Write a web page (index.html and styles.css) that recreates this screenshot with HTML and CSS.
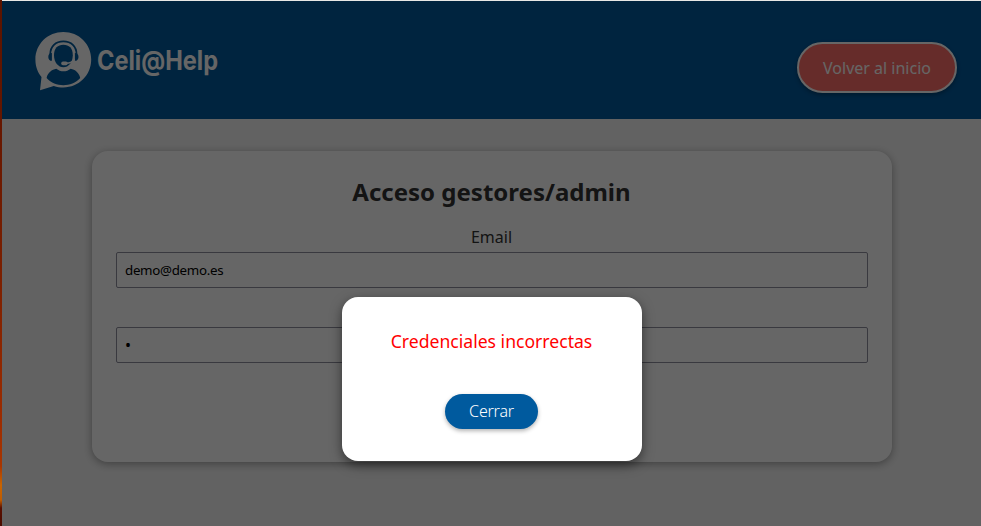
FILE: index.html
```html
<!DOCTYPE html>
<html lang="es">
<head>
<meta charset="utf-8">
<title>Celi@Help</title>
<link rel="stylesheet" href="styles.css">
</head>
<body>
<div class="window">
  <header class="header">
    <div class="brand">
      <svg class="brand-icon" viewBox="0 0 58 60" width="58" height="60">
        <path d="M28.300 1C13 1 .4 12.800.4 28.500c0 7.200 2.400 13 6.100 17.500L5 59.300 18.800 54.900C22 56 25.300 56.500 28.300 56.500 44 56.500 56.200 44.200 56.200 28.600S44 1 28.300 1Z" fill="#fff"/>
        <path d="M11.600 47C12.600 41.700 17 38.600 21.300 37.800 25.500 41.200 31.500 41.200 35.700 37.800 40 38.600 44.200 41.700 45.200 47 36.200 56.600 20.500 56.600 11.600 47Z" fill="#005a9e"/>
        <path d="M19 24.300C19 17 22.800 13.700 28.400 13.700S37.800 17 37.800 24.300C37.700 31.500 33.600 36.300 28.400 36.300S19.100 31.500 19 24.300Z" fill="#005a9e"/>
        <path d="M15.300 23C15.300 15.400 20.600 10.300 28.400 10.300S41.500 15.400 41.500 23" fill="none" stroke="#005a9e" stroke-width="1.800"/>
        <path d="M16.900 22V29.800C14.600 29.800 13.300 28.300 13.300 25.900S14.600 22 16.900 22ZM39.900 22V29.800C42.200 29.800 43.500 28.300 43.500 25.900S42.200 22 39.900 22Z" fill="#005a9e"/>
        <path d="M39.300 28C38.200 31 35.300 32.200 30.500 32.300" fill="none" stroke="#fff" stroke-width="1.500"/>
        <rect x="26.200" y="30.500" width="6.500" height="3.700" rx="1.800" fill="#fff"/>
      </svg>
      <svg class="brand-name" width="124" height="40" viewBox="0 0 124 40"><text x="1" y="29" textLength="121" lengthAdjust="spacingAndGlyphs">Celi@Help</text></svg>
    </div>
    <button class="back">Volver al inicio</button>
  </header>
  <main class="main">
    <form class="card">
      <h1 class="title">Acceso gestores/admin</h1>
      <label class="label" for="email">Email</label>
      <input class="field" id="email" type="text" value="demo@demo.es">
      <input class="field field-password" type="text" value="•" aria-label="Clave">
    </form>
  </main>
  <div class="overlay">
    <div class="modal">
      <p class="message">Credenciales incorrectas</p>
      <button class="close">Cerrar</button>
    </div>
  </div>
</div>
</body>
</html>
```
FILE: styles.css
```css
* {
  box-sizing: border-box;
}

body {
  margin: 0;
  height: 526px;
  padding: 1px 0 0 2px;
  overflow: hidden;
  font-family: "Noto Sans", sans-serif;
  font-size: 16px;
  background:
    linear-gradient(#e8e8e6, #e8e8e6) 2px 0 / 100% 1px no-repeat,
    linear-gradient(#5c1400 0, #641600 110px, #7c2000 280px, #9c2c00 420px, #a83600 466px, #c86400 485px, #c05c00 500px, #5a1000 508px, #4a0c00 526px);
}

.window {
  position: relative;
  height: 525px;
  background: #f5f5f5;
}

.header {
  display: flex;
  justify-content: space-between;
  align-items: center;
  height: 118px;
  padding: 14px 24px 0 33px;
  background: #005a9e;
}

.brand {
  display: flex;
  align-items: center;
  gap: 3px;
  margin-top: -12px;
}

.brand-name {
  overflow: visible;
  fill: #fff;
  font: bold 26.5px Inter, sans-serif;
}

.back {
  width: 160px;
  height: 51px;
  padding: 2px 0 0;
  border: 2px solid #fff;
  border-radius: 26px;
  background: #ff6f69;
  color: #fff;
  font: 16px "Noto Sans", sans-serif;
  box-shadow: 0 2px 4px rgba(0, 0, 0, 0.3);
}

.main {
  padding: 32px 89px 0 90px;
}

.card {
  display: flex;
  flex-direction: column;
  width: 800px;
  height: 311px;
  padding: 24px;
  border-radius: 16px;
  background: #fff;
  box-shadow: 0 2px 8px rgba(0, 0, 0, 0.35);
}

.title {
  margin: 0 1px 17px 0;
  font-size: 24px;
  line-height: 34px;
  text-align: center;
  color: #333;
}

.label {
  margin: 0 1px 4px 0;
  line-height: 22px;
  text-align: center;
  color: #333;
}

.field {
  height: 36px;
  padding: 0 8px;
  border: 1px solid #8f8f9d;
  border-radius: 2px;
  background: #fff;
  color: #000;
  font: 13.333px "Noto Sans", sans-serif;
  letter-spacing: -0.3px;
}

.field-password {
  margin-top: 39px;
  font-size: 16px;
}

.overlay {
  position: absolute;
  inset: 0;
  display: grid;
  justify-content: center;
  align-items: start;
  padding-top: 296px;
  background: rgba(0, 0, 0, 0.6);
}

.modal {
  display: flex;
  flex-direction: column;
  align-items: center;
  width: 300px;
  height: 164px;
  padding: 32px 24px;
  border-radius: 16px;
  background: #fff;
  box-shadow: 0 4px 12px rgba(0, 0, 0, 0.5);
}

.message {
  margin: 0 0 40px;
  font-size: 17.6px;
  line-height: 25px;
  color: #f00;
}

.close {
  width: 93px;
  height: 35px;
  padding: 0 0 2px;
  border: 0;
  border-radius: 18px;
  background: #005a9e;
  color: #fff;
  font: 300 16px "Noto Sans", sans-serif;
  letter-spacing: -0.2px;
  box-shadow: 0 2px 4px rgba(0, 0, 0, 0.3);
}
```
